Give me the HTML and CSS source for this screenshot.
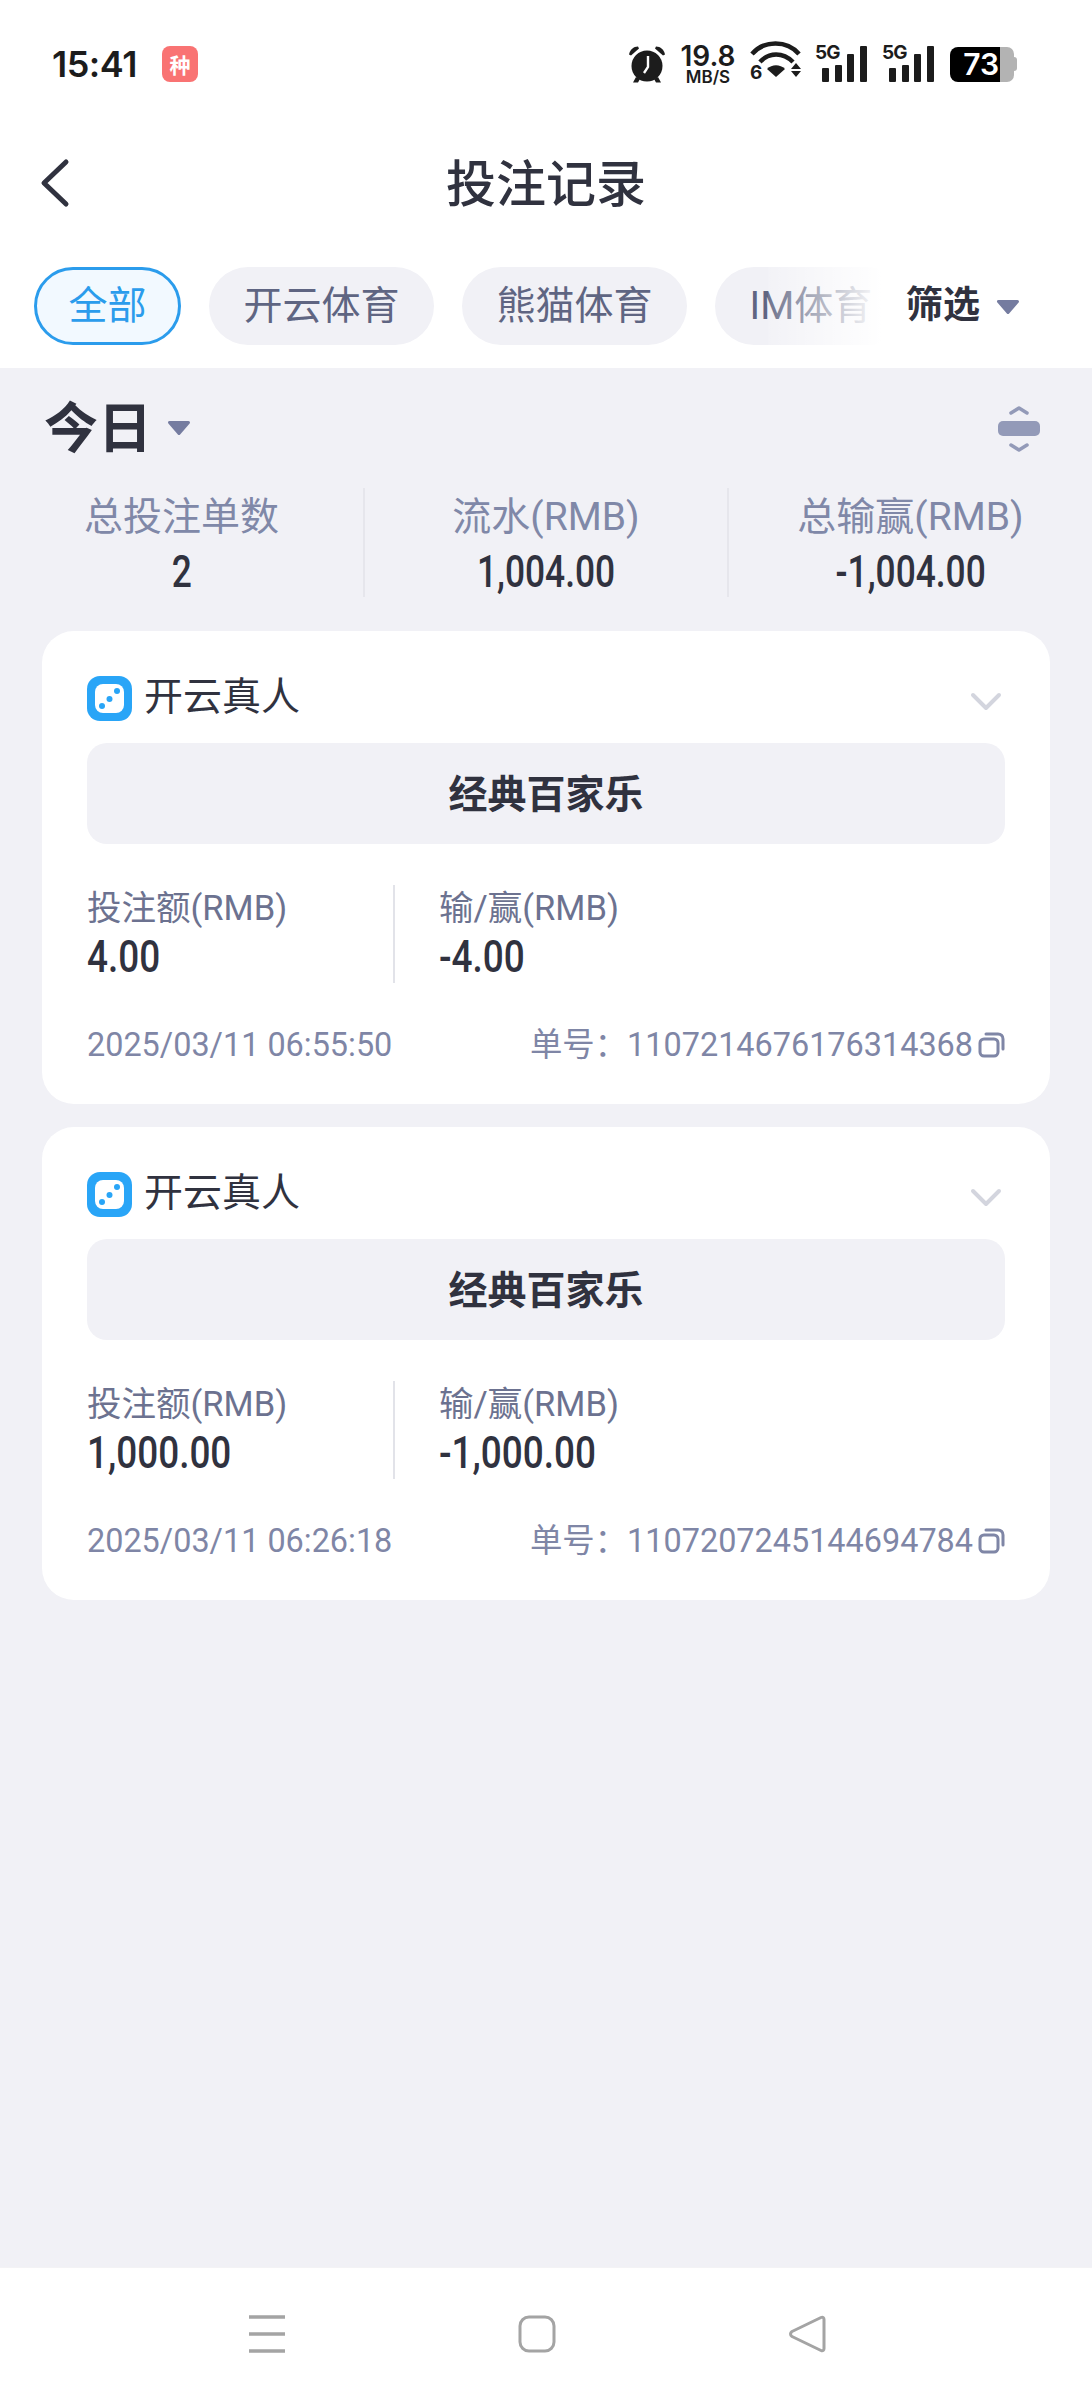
FILE: index.html
```html
<!DOCTYPE html>
<html>
<head>
    <title>投注记录</title>
    <meta name="viewport" content="width=device-width, initial-scale=1.0">
    <link rel="stylesheet" href="styles.css">
</head>
<body>
    <div class="page">
        <div class="status-bar">
            <div class="status-left">
                <span class="clock">15:41</span>
                <span class="app-badge">种</span>
            </div>
            <div class="status-right">
                <svg class="alarm" width="38" height="38" viewBox="0 0 38 38">
                    <path d="M1 9.5C2 4.5 5.5 1.5 10 1.500L11 3.5 3 10.5Z" fill="#1c1c1c"/>
                    <path d="M37 9.5C36 4.5 32.5 1.5 28 1.500L27 3.5 35 10.5Z" fill="#1c1c1c"/>
                    <circle cx="19" cy="21" r="15.500" fill="#1c1c1c"/>
                    <path d="M8 32L5 37.5H10L12 34M30 32L33 37.5H28L26 34" fill="#1c1c1c"/>
                    <path d="M20 11V22L16 28" fill="none" stroke="#fff" stroke-width="2.400"/>
                </svg>
                <div class="speed">
                    <span class="speed-num">19.8</span>
                    <span class="speed-unit">MB/S</span>
                </div>
                <svg class="wifi" width="52" height="46" viewBox="0 -2 52 46">
                    <path d="M2 13C14 -1 37 -1 49 13" fill="none" stroke="#1c1c1c" stroke-width="4.500"/>
                    <path d="M10 21C19 11 33 11 43 21" fill="none" stroke="#1c1c1c" stroke-width="4.500"/>
                    <path d="M17 28C22 23 30 23 35 28L26 36Z" fill="#1c1c1c"/>
                    <text x="0" y="38" class="wifi-six">6</text>
                    <path d="M41 28L46 22 51 28ZM41 30H51L46 36Z" fill="#1c1c1c"/>
                </svg>
                <div class="signal">
                    <span class="net">5G</span>
                    <svg width="45" height="36" viewBox="0 0 45 36">
                        <rect x="0" y="22" width="7" height="14" rx="1" fill="#1c1c1c"/>
                        <rect x="13" y="19" width="7" height="17" rx="1" fill="#1c1c1c"/>
                        <rect x="25" y="8" width="7" height="28" rx="1" fill="#1c1c1c"/>
                        <rect x="38" y="0" width="7" height="36" rx="1" fill="#1c1c1c"/>
                    </svg>
                </div>
                <div class="signal">
                    <span class="net">5G</span>
                    <svg width="45" height="36" viewBox="0 0 45 36">
                        <rect x="0" y="22" width="7" height="14" rx="1" fill="#1c1c1c"/>
                        <rect x="13" y="19" width="7" height="17" rx="1" fill="#1c1c1c"/>
                        <rect x="25" y="8" width="7" height="28" rx="1" fill="#1c1c1c"/>
                        <rect x="38" y="0" width="7" height="36" rx="1" fill="#1c1c1c"/>
                    </svg>
                </div>
                <div class="battery">
                    <span class="battery-level">73</span>
                    <span class="battery-rest"></span>
                    <span class="battery-nub"></span>
                </div>
            </div>
        </div>

        <div class="nav-bar">
            <svg class="back" width="30" height="50" viewBox="0 0 30 50">
                <path d="M26 4L4 25 26 46" fill="none" stroke="#30323f" stroke-width="5" stroke-linecap="round" stroke-linejoin="round"/>
            </svg>
            <h1>投注记录</h1>
        </div>

        <div class="tab-row">
            <div class="tabs">
                <span class="tab active">全部</span>
                <span class="tab">开云体育</span>
                <span class="tab">熊猫体育</span>
                <span class="tab">IM体育</span>
            </div>
            <div class="filter">
                <span>筛选</span>
                <svg width="24" height="16" viewBox="0 0 24 16"><path d="M2.500 2.500H21.500L12 13.500Z" fill="#757ca0" stroke="#757ca0" stroke-width="3" stroke-linejoin="round"/></svg>
            </div>
        </div>

        <div class="content">
            <div class="period-row">
                <div class="period">
                    <span>今日</span>
                    <svg width="24" height="16" viewBox="0 0 24 16"><path d="M2.500 2.500H21.500L12 13.500Z" fill="#757ca0" stroke="#757ca0" stroke-width="3" stroke-linejoin="round"/></svg>
                </div>
                <svg class="collapse" width="42" height="48" viewBox="0 0 42 48">
                    <path d="M13 8L21 3 29 8" fill="none" stroke="#939ab8" stroke-width="3.500" stroke-linecap="round" stroke-linejoin="round"/>
                    <rect x="0" y="16" width="42" height="15" rx="5" fill="#939ab8"/>
                    <path d="M13 40L21 45 29 40" fill="none" stroke="#939ab8" stroke-width="3.500" stroke-linecap="round" stroke-linejoin="round"/>
                </svg>
            </div>

            <div class="summary">
                <div class="summary-item">
                    <div class="summary-label">总投注单数</div>
                    <div class="amount">2</div>
                </div>
                <div class="summary-item">
                    <div class="summary-label">流水(RMB)</div>
                    <div class="amount">1,004.00</div>
                </div>
                <div class="summary-item">
                    <div class="summary-label">总输赢(RMB)</div>
                    <div class="amount">-1,004.00</div>
                </div>
            </div>

            <div class="record-list">
                <div class="record">
                    <div class="record-head">
                        <div class="record-venue">
                            <svg width="45" height="45" viewBox="0 0 45 45">
                                <rect width="45" height="45" rx="13" fill="#29a5f7"/>
                                <rect x="8" y="8" width="29" height="29" rx="8" fill="#fff"/>
                                <circle cx="15" cy="30" r="3" fill="#29a5f7"/>
                                <circle cx="22.500" cy="23" r="3" fill="#29a5f7"/>
                                <circle cx="30" cy="15" r="3" fill="#29a5f7"/>
                            </svg>
                            <span>开云真人</span>
                        </div>
                        <svg class="record-toggle" width="32" height="20" viewBox="0 0 32 20"><path d="M3 3L16 16 29 3" fill="none" stroke="#d3d5de" stroke-width="4" stroke-linecap="round" stroke-linejoin="round"/></svg>
                    </div>
                    <div class="game-name">经典百家乐</div>
                    <div class="record-amounts">
                        <div class="record-col">
                            <div class="record-label">投注额(RMB)</div>
                            <div class="amount">4.00</div>
                        </div>
                        <div class="record-col">
                            <div class="record-label">输/赢(RMB)</div>
                            <div class="amount">-4.00</div>
                        </div>
                    </div>
                    <div class="record-foot">
                        <span>2025/03/11 06:55:50</span>
                        <div class="order-no">
                            <span>单号：1107214676176314368</span>
                            <svg width="27" height="26" viewBox="0 0 27 26">
                                <rect x="2" y="7" width="18" height="17" rx="4" fill="none" stroke="#7f86a6" stroke-width="3"/>
                                <path d="M8 2H20C23 2 25 4 25 7V17" fill="none" stroke="#7f86a6" stroke-width="3" stroke-linecap="round"/>
                            </svg>
                        </div>
                    </div>
                </div>

                <div class="record">
                    <div class="record-head">
                        <div class="record-venue">
                            <svg width="45" height="45" viewBox="0 0 45 45">
                                <rect width="45" height="45" rx="13" fill="#29a5f7"/>
                                <rect x="8" y="8" width="29" height="29" rx="8" fill="#fff"/>
                                <circle cx="15" cy="30" r="3" fill="#29a5f7"/>
                                <circle cx="22.500" cy="23" r="3" fill="#29a5f7"/>
                                <circle cx="30" cy="15" r="3" fill="#29a5f7"/>
                            </svg>
                            <span>开云真人</span>
                        </div>
                        <svg class="record-toggle" width="32" height="20" viewBox="0 0 32 20"><path d="M3 3L16 16 29 3" fill="none" stroke="#d3d5de" stroke-width="4" stroke-linecap="round" stroke-linejoin="round"/></svg>
                    </div>
                    <div class="game-name">经典百家乐</div>
                    <div class="record-amounts">
                        <div class="record-col">
                            <div class="record-label">投注额(RMB)</div>
                            <div class="amount">1,000.00</div>
                        </div>
                        <div class="record-col">
                            <div class="record-label">输/赢(RMB)</div>
                            <div class="amount">-1,000.00</div>
                        </div>
                    </div>
                    <div class="record-foot">
                        <span>2025/03/11 06:26:18</span>
                        <div class="order-no">
                            <span>单号：1107207245144694784</span>
                            <svg width="27" height="26" viewBox="0 0 27 26">
                                <rect x="2" y="7" width="18" height="17" rx="4" fill="none" stroke="#7f86a6" stroke-width="3"/>
                                <path d="M8 2H20C23 2 25 4 25 7V17" fill="none" stroke="#7f86a6" stroke-width="3" stroke-linecap="round"/>
                            </svg>
                        </div>
                    </div>
                </div>
            </div>
        </div>

        <div class="system-nav">
            <svg width="36" height="38" viewBox="0 0 36 38">
                <path d="M0 2H36M0 19H36M0 36H36" stroke="#a4a4a4" stroke-width="3.500"/>
            </svg>
            <svg width="38" height="38" viewBox="0 0 38 38">
                <rect x="2" y="2" width="34" height="34" rx="9" fill="none" stroke="#a4a4a4" stroke-width="3"/>
            </svg>
            <svg width="38" height="38" viewBox="0 0 38 38">
                <path d="M33 2.500C35 1.500 36 3 36 4.500V33.500C36 35 35 36.500 33 35.500L4 21.500C2 20 2 18 4 16.500Z" fill="none" stroke="#a4a4a4" stroke-width="3" stroke-linejoin="round"/>
            </svg>
        </div>
    </div>
</body>
</html>
```

FILE: styles.css
```css
body {
    margin: 0;
    font-family: Roboto, "Noto Sans CJK SC", sans-serif;
    color: #30323f;
    background: #fff;
}

.page {
    width: 1092px;
    height: 2400px;
    display: flex;
    flex-direction: column;
    overflow: hidden;
}

/* Status bar */
.status-bar {
    height: 128px;
    flex-shrink: 0;
    display: flex;
    align-items: center;
    justify-content: space-between;
    padding: 0 75px 0 52px;
}

.status-left {
    display: flex;
    align-items: center;
    gap: 25px;
}

.clock {
    font-family: Inter, sans-serif;
    font-size: 36px;
    font-weight: 600;
    letter-spacing: -0.5px;
    color: #1c1c1c;
}

.app-badge {
    width: 36px;
    height: 36px;
    border-radius: 8px;
    background: #f97373;
    color: #fff;
    font-size: 21px;
    font-weight: 700;
    display: flex;
    align-items: center;
    justify-content: center;
}

.status-right {
    display: flex;
    align-items: center;
    color: #1c1c1c;
}

.alarm {
    margin-right: 14px;
}

.speed {
    width: 56px;
    display: flex;
    flex-direction: column;
    align-items: center;
    font-family: Inter, sans-serif;
    margin-right: 14px;
}

.speed-num {
    font-size: 28px;
    font-weight: 600;
    line-height: 26px;
}

.speed-unit {
    font-size: 17px;
    font-weight: 600;
    line-height: 16px;
}

.wifi-six {
    font-family: Inter, sans-serif;
    font-size: 19px;
    font-weight: 700;
    fill: #1c1c1c;
}

.wifi {
    margin: -4px 13px 0 0;
}

.signal {
    position: relative;
    width: 52px;
    height: 36px;
    margin-right: 15px;
    display: flex;
    justify-content: flex-end;
}

.signal + .signal {
    margin-right: 16px;
}

.net {
    position: absolute;
    left: 0;
    top: -3px;
    font-family: Inter, sans-serif;
    font-size: 19px;
    font-weight: 700;
    letter-spacing: -1px;
    line-height: 20px;
}

.battery {
    display: flex;
    align-items: center;
    height: 35px;
}

.battery-level {
    width: 50px;
    height: 35px;
    padding-right: 1px;
    background: #000;
    color: #fff;
    border-radius: 8px 0 0 8px;
    font-family: Inter, sans-serif;
    font-size: 30px;
    font-weight: 600;
    line-height: 35px;
    text-align: right;
    box-sizing: border-box;
}

.battery-rest {
    width: 14px;
    height: 35px;
    background: #b3b3b3;
    border-radius: 0 7px 7px 0;
}

.battery-nub {
    width: 3px;
    height: 14px;
    background: #b3b3b3;
    border-radius: 0 3px 3px 0;
}

/* Title */
.nav-bar {
    position: relative;
    height: 104px;
    flex-shrink: 0;
    display: flex;
    align-items: center;
    justify-content: center;
}

.back {
    position: absolute;
    left: 40px;
    top: 30px;
}

h1 {
    margin: 0;
    font-size: 50px;
    font-weight: 500;
}

/* Tabs */
.tab-row {
    display: flex;
    align-items: center;
    padding: 35px 0 23px 34px;
    flex-shrink: 0;
}

.tabs {
    position: relative;
    width: 848px;
    display: flex;
    gap: 28px;
    overflow: hidden;
}

.tabs::after {
    content: "";
    position: absolute;
    right: 0;
    top: 0;
    bottom: 0;
    width: 114px;
    background: linear-gradient(to right, rgba(255, 255, 255, 0.1), #fff);
}

.tab {
    height: 78px;
    padding: 0 34.500px;
    border-radius: 39px;
    background: #f1f1f6;
    color: #5f6582;
    font-size: 39px;
    line-height: 78px;
    white-space: nowrap;
    flex-shrink: 0;
}

.tab.active {
    box-sizing: border-box;
    line-height: 72px;
    padding: 0 31.500px;
    background: #f2f9ff;
    border: 3px solid #2b9cec;
    color: #2b9cec;
}

.filter {
    margin-left: 24px;
    display: flex;
    align-items: center;
    gap: 16px;
    font-size: 37px;
    font-weight: 700;
    line-height: 50px;
}

.filter svg {
    margin-top: 2px;
}

/* Main area */
.content {
    flex: 1;
    background: #f1f1f6;
    padding: 0 42px;
}

.period-row {
    height: 120px;
    box-sizing: border-box;
    display: flex;
    align-items: center;
    justify-content: space-between;
    padding: 0 10px 8px 2px;
}

.period {
    display: flex;
    align-items: center;
    gap: 15px;
    font-size: 54px;
    font-weight: 700;
}

.period svg {
    margin-top: 8px;
}

.collapse {
    margin-top: 10px;
}

.summary {
    display: grid;
    grid-template-columns: 363px 364px 365px;
    margin: 0 -42px;
    height: 109px;
}

.summary-item {
    text-align: center;
    border-left: 2px solid #e6e6ec;
}

.summary-item:first-child {
    border-left: 0;
}

.summary-label {
    font-size: 39px;
    line-height: 58px;
    color: #8088a8;
}

.amount {
    display: inline-block;
    font-size: 45px;
    font-weight: 500;
    line-height: 50px;
    color: #30323f;
    white-space: nowrap;
    transform: scaleX(0.82);
    transform-origin: left center;
}

.summary .amount {
    margin-top: 1px;
    transform: scaleX(0.785);
    transform-origin: center;
}

.record-list {
    display: flex;
    flex-direction: column;
    gap: 23px;
    margin-top: 34px;
}

.record {
    height: 473px;
    box-sizing: border-box;
    background: #fff;
    border-radius: 32px;
    padding: 45px 45px 0;
}

.record-head {
    height: 44px;
    display: flex;
    align-items: center;
    justify-content: space-between;
    padding-right: 3px;
}

.record-venue {
    display: flex;
    align-items: center;
    gap: 12px;
    font-size: 39px;
}

.record-venue span {
    line-height: 44px;
    padding-bottom: 2px;
}

.record-toggle {
    margin-top: 8px;
}

.game-name {
    margin-top: 23px;
    height: 101px;
    border-radius: 20px;
    background: #f1f1f6;
    text-align: center;
    line-height: 105px;
    font-size: 39px;
    font-weight: 700;
}

.record-amounts {
    display: flex;
    height: 98px;
    margin-top: 41px;
}

.record-col {
    width: 306px;
}

.record-col + .record-col {
    border-left: 2px solid #e2e3e9;
    padding-left: 44px;
}

.record-label {
    font-size: 34.500px;
    line-height: 46px;
    color: #6c7290;
}

.record-col .amount {
    margin-top: 1px;
}

.record-foot {
    display: flex;
    align-items: center;
    justify-content: space-between;
    margin-top: 42px;
    font-size: 32.400px;
    line-height: 40px;
    color: #7f86a6;
}

.order-no {
    display: flex;
    align-items: center;
    gap: 5px;
}

/* System navigation */
.system-nav {
    height: 133px;
    flex-shrink: 0;
    box-sizing: border-box;
    border-top: 1px solid #f3f3f5;
    display: flex;
    align-items: flex-start;
    justify-content: space-between;
    padding: 47px 266px 0 249px;
}
```
